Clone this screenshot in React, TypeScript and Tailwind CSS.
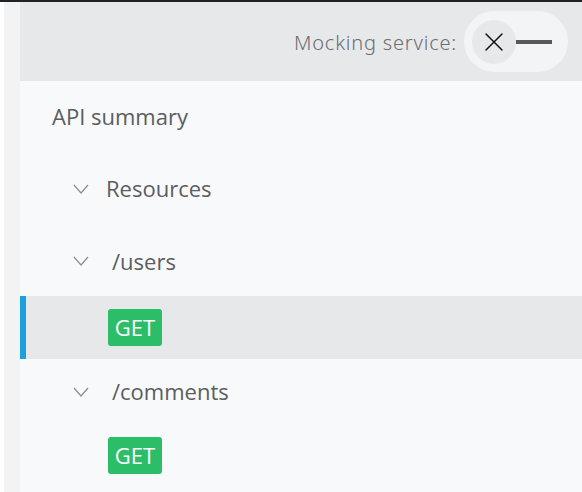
import { X } from "lucide-react";

function Chevron() {
  return (
    <svg width="16" height="10" viewBox="0 0 16 10" fill="none" className="text-[#8a8d92]">
      <polyline points="1,1 8,9 15,1" stroke="currentColor" strokeWidth="1.2" />
    </svg>
  );
}

function GetBadge() {
  return (
    <span className="flex h-[37px] w-[54px] items-center justify-center rounded-[3px] bg-[#2bbd68] text-[22px] text-white">
      GET
    </span>
  );
}

export default function App() {
  return (
    <div
      className="flex h-[492px] w-[582px] flex-col overflow-hidden bg-white"
      style={{ fontFamily: "'Open Sans', 'Noto Sans', sans-serif" }}
    >
      <div className="h-[2px] bg-[#222]" />
      <div className="flex flex-1">
        <div className="w-[4px] bg-white" />
        <div className="w-[16px] bg-[#f2f3f5]" />
        <div className="flex flex-1 flex-col bg-[#f8f9fb]">
          {/* Header */}
          <div className="flex h-[79px] items-center justify-end bg-[#e7e8ea] pr-[14px]">
            <span
              className="mr-[7px] mt-[2px] text-[20px] tracking-[0.8px] text-[#6b6d70]"
              style={{ fontFamily: "'Noto Sans', sans-serif", fontWeight: 300 }}
            >
              Mocking service:
            </span>
            <div className="flex h-[61px] w-[104px] items-center rounded-full bg-[#f3f4f6] pl-[8px]">
              <div className="flex h-[44px] w-[44px] items-center justify-center rounded-full bg-[#e7e8ea]">
                <X size={32} strokeWidth={1.1} className="text-[#111]" />
              </div>
              <div className="h-[4px] w-[36px] bg-[#575859]" />
            </div>
          </div>

          {/* Tree */}
          <div className="flex h-[70px] items-center pl-[32px] text-[22px] text-[#5b5d60]">
            API summary
          </div>
          <div className="flex h-[75px] items-center pl-[53px] text-[22px] text-[#5b5d60]">
            <Chevron />
            <span className="ml-[17px]">Resources</span>
          </div>
          <div className="flex h-[70px] items-center pl-[53px] text-[22px] text-[#5b5d60]">
            <Chevron />
            <span className="ml-[23px]">/users</span>
          </div>
          <div className="flex h-[63px] items-center border-l-[6px] border-[#1ba1e0] bg-[#e7e8ea] pl-[82px]">
            <GetBadge />
          </div>
          <div className="flex h-[65px] items-center pl-[53px] text-[22px] text-[#5b5d60]">
            <Chevron />
            <span className="ml-[23px]">/comments</span>
          </div>
          <div className="flex h-[63px] items-center pl-[88px]">
            <GetBadge />
          </div>
        </div>
      </div>
    </div>
  );
}
